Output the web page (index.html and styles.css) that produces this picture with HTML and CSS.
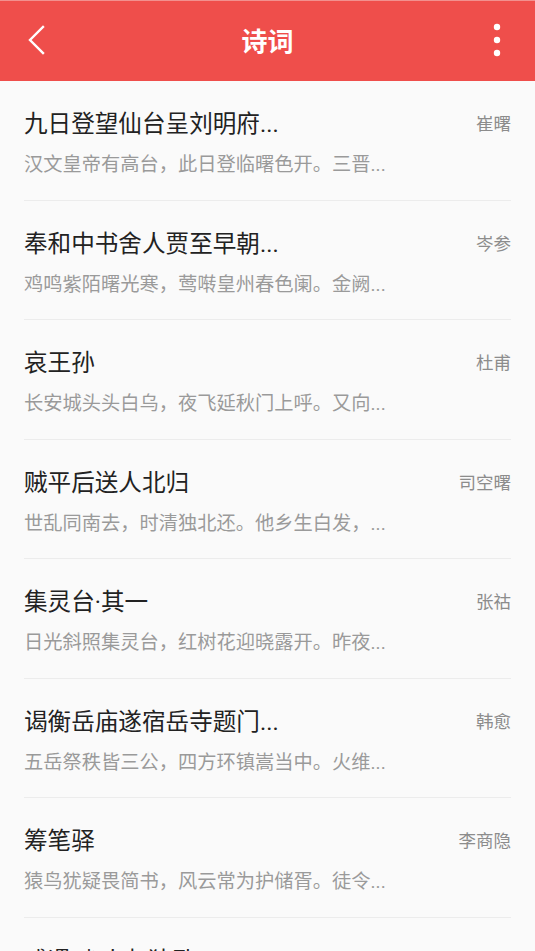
FILE: index.html
```html
<!DOCTYPE html>
<html lang="zh-CN">
<head>
  <meta charset="UTF-8">
  <title>诗词</title>
  <meta name="viewport" content="width=device-width, initial-scale=1">
  <link rel="stylesheet" href="styles.css">
</head>
<body>
  <header class="topbar">
    <div class="bar-side">
      <button class="icon-btn back" aria-label="返回">
        <svg width="20" height="30" viewBox="0 0 20 30">
          <polyline points="15,2 2,15 15,28" fill="none" stroke="#fff" stroke-width="2.4" stroke-linecap="square"/>
        </svg>
      </button>
    </div>
    <h1 class="title">诗词</h1>
    <div class="bar-side right">
      <button class="icon-btn more" aria-label="更多">
        <svg width="10" height="36" viewBox="0 0 10 36">
          <circle cx="5" cy="5" r="3.2" fill="#fff"/>
          <circle cx="5" cy="18" r="3.2" fill="#fff"/>
          <circle cx="5" cy="31" r="3.2" fill="#fff"/>
        </svg>
      </button>
    </div>
  </header>

  <ul class="poems">
    <li class="poem">
      <div class="poem-head"><span class="poem-title">九日登望仙台呈刘明府...</span><span class="poem-author">崔曙</span></div>
      <p class="poem-line">汉文皇帝有高台，此日登临曙色开。三晋...</p>
    </li>
    <li class="poem">
      <div class="poem-head"><span class="poem-title">奉和中书舍人贾至早朝...</span><span class="poem-author">岑参</span></div>
      <p class="poem-line">鸡鸣紫陌曙光寒，莺啭皇州春色阑。金阙...</p>
    </li>
    <li class="poem">
      <div class="poem-head"><span class="poem-title">哀王孙</span><span class="poem-author">杜甫</span></div>
      <p class="poem-line">长安城头头白乌，夜飞延秋门上呼。又向...</p>
    </li>
    <li class="poem">
      <div class="poem-head"><span class="poem-title">贼平后送人北归</span><span class="poem-author">司空曙</span></div>
      <p class="poem-line">世乱同南去，时清独北还。他乡生白发，...</p>
    </li>
    <li class="poem">
      <div class="poem-head"><span class="poem-title">集灵台·其一</span><span class="poem-author">张祜</span></div>
      <p class="poem-line">日光斜照集灵台，红树花迎晓露开。昨夜...</p>
    </li>
    <li class="poem">
      <div class="poem-head"><span class="poem-title">谒衡岳庙遂宿岳寺题门...</span><span class="poem-author">韩愈</span></div>
      <p class="poem-line">五岳祭秩皆三公，四方环镇嵩当中。火维...</p>
    </li>
    <li class="poem">
      <div class="poem-head"><span class="poem-title">筹笔驿</span><span class="poem-author">李商隐</span></div>
      <p class="poem-line">猿鸟犹疑畏简书，风云常为护储胥。徒令...</p>
    </li>
    <li class="poem">
      <div class="poem-head"><span class="poem-title">感遇·幽人归独卧</span><span class="poem-author">张九龄</span></div>
      <p class="poem-line">幽人归独卧，滞虑洗孤清。持此谢高鸟，...</p>
    </li>
  </ul>
</body>
</html>
```

FILE: styles.css
```css
html, body {
  margin: 0;
  padding: 0;
}

body {
  width: 535px;
  height: 951px;
  overflow: hidden;
  background: #fafafa;
  font-family: Roboto, "Noto Sans CJK SC", sans-serif;
}

.topbar {
  height: 80px;
  background: #ef4e4b;
  border-top: 1px solid #f2908e;
  display: grid;
  grid-template-columns: 1fr auto 1fr;
  align-items: center;
}

.bar-side {
  display: flex;
  align-items: center;
}

.bar-side.right {
  justify-content: flex-end;
}

.icon-btn {
  background: none;
  border: none;
  padding: 0;
  display: flex;
  align-items: center;
  justify-content: center;
}

.back {
  width: 20px;
  height: 40px;
  margin: -2px 0 0 28px;
}

.more {
  width: 76px;
  height: 40px;
  margin-top: -2px;
}

.title {
  margin: -2px 0 0;
  color: #fff;
  font-family: "Noto Sans CJK SC", sans-serif;
  font-size: 26px;
  font-weight: bold;
  line-height: 32px;
}

.poems {
  list-style: none;
  margin: 0;
  padding: 0 24px;
}

.poem {
  height: 91.5px;
  padding-top: 27px;
  border-bottom: 1px solid #ececec;
}

.poem-head {
  display: flex;
  align-items: center;
  justify-content: space-between;
  height: 32px;
}

.poem-title {
  font-size: 23.6px;
  line-height: 32px;
  color: #222;
}

.poem-author {
  font-size: 17.5px;
  line-height: 24px;
  color: #8c8c8c;
}

.poem-line {
  margin: 12px 0 0;
  font-size: 19.25px;
  line-height: 26px;
  color: #9a9a9a;
}
```
